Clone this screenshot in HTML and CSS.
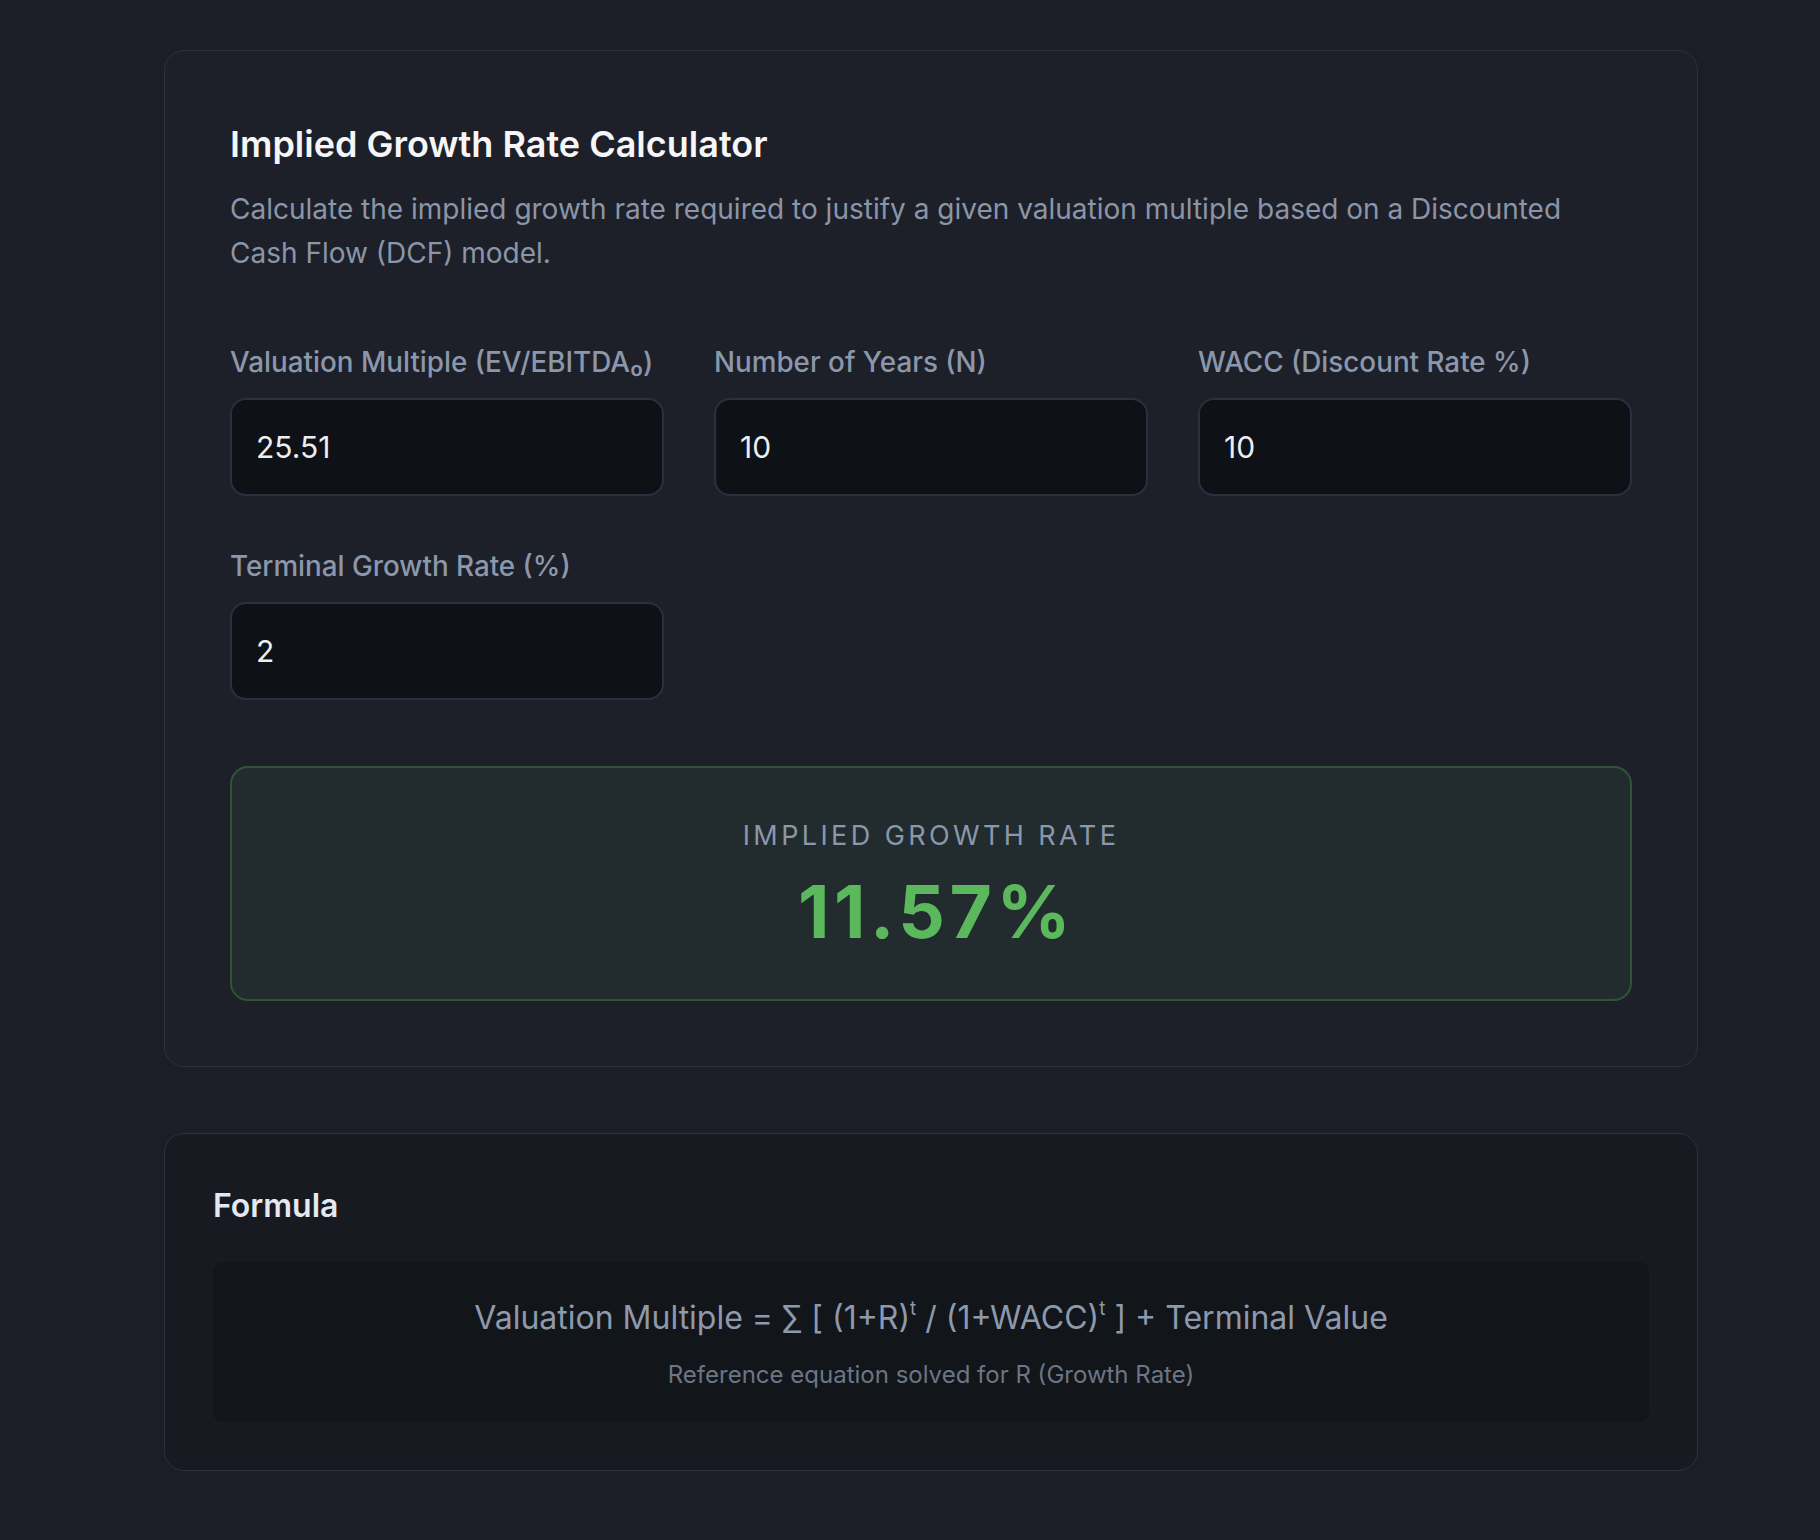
FILE: index.html
```html
<!DOCTYPE html>
<html lang="en">
<head>
<meta charset="utf-8">
<title>Implied Growth Rate Calculator</title>
<link rel="stylesheet" href="styles.css">
</head>
<body>
<main class="page">
  <section class="card calc">
    <h1 class="title">Implied Growth Rate Calculator</h1>
    <p class="desc">Calculate the implied growth rate required to justify a given valuation multiple based on a Discounted Cash Flow (DCF) model.</p>
    <div class="fields">
      <label class="field">
        <span class="label">Valuation Multiple (EV/EBITDA₀)</span>
        <input class="input" type="text" value="25.51">
      </label>
      <label class="field">
        <span class="label">Number of Years (N)</span>
        <input class="input" type="text" value="10">
      </label>
      <label class="field">
        <span class="label">WACC (Discount Rate %)</span>
        <input class="input" type="text" value="10">
      </label>
      <label class="field">
        <span class="label">Terminal Growth Rate (%)</span>
        <input class="input" type="text" value="2">
      </label>
    </div>
    <div class="result">
      <div class="result-label">IMPLIED GROWTH RATE</div>
      <div class="result-value">11.57%</div>
    </div>
  </section>
  <section class="card formula">
    <h2 class="formula-title">Formula</h2>
    <div class="formula-box">
      <div class="equation">Valuation Multiple = ∑ [ (1+R)<sup>t</sup> / (1+WACC)<sup>t</sup> ] + Terminal Value</div>
      <div class="note">Reference equation solved for R (Growth Rate)</div>
    </div>
  </section>
</main>
</body>
</html>
```
FILE: styles.css
```css
* { box-sizing: border-box; }
html, body { margin: 0; padding: 0; }
body {
  background: #1b1e27;
  font-family: Inter, "Noto Sans", "Liberation Sans", sans-serif;
  color: #e6e8ee;
  min-height: 1540px;
}
.page {
  padding: 50px 0 60px 164px;
  display: flex;
  flex-direction: column;
  gap: 66px;
}
.card {
  width: 1534px;
  border: 1px solid #2d3040;
  border-radius: 20px;
}
.calc {
  background: #1e2029;
  padding: 65px;
}
.title {
  margin: 0;
  font-size: 36px;
  line-height: 56px;
  font-weight: 600;
  color: #f5f6f8;
}
.desc {
  margin: 15px 0 0;
  max-width: 1380px;
  font-size: 28px;
  line-height: 44px;
  color: #8b95a8;
}
.fields {
  margin-top: 67px;
  display: grid;
  grid-template-columns: repeat(3, 1fr);
  gap: 50px;
}
.field {
  display: flex;
  flex-direction: column;
  gap: 16px;
}
.label {
  font-size: 27.8px;
  line-height: 40px;
  font-weight: 500;
  color: #8b97ab;
}
.input {
  height: 98px;
  width: 100%;
  background: #0e1116;
  border: 2px solid #2c2f3e;
  border-radius: 16px;
  padding: 0 24px;
  font-family: inherit;
  font-size: 30px;
  color: #eceef2;
  outline: none;
}
.result {
  margin-top: 66px;
  height: 235px;
  background: #222c2e;
  border: 2px solid #2e5535;
  border-radius: 18px;
  display: flex;
  flex-direction: column;
  align-items: center;
  padding-top: 48px;
}
.result-label {
  font-size: 27px;
  line-height: 40px;
  letter-spacing: 3.4px;
  color: #8b97ab;
}
.result-value {
  margin-top: 19px;
  padding-left: 11px;
  font-size: 73px;
  line-height: 73px;
  font-weight: 700;
  letter-spacing: 4.5px;
  color: #5cb85c;
}
.formula {
  background: #181a21;
  padding: 48px;
}
.formula-title {
  margin: 0;
  font-size: 32px;
  line-height: 48px;
  font-weight: 600;
  color: #e6e8f0;
}
.formula-box {
  margin-top: 32px;
  background: #121519;
  border-radius: 10px;
  height: 160px;
  padding-top: 33px;
  display: flex;
  flex-direction: column;
  align-items: center;
}
.equation {
  font-size: 32px;
  line-height: 45px;
  color: #8e99ad;
}
.equation sup {
  font-size: 19px;
  line-height: 0;
  vertical-align: 0;
  position: relative;
  top: -14px;
}
.note {
  margin-top: 18px;
  font-size: 24px;
  line-height: 33px;
  color: #6d7586;
}
```
